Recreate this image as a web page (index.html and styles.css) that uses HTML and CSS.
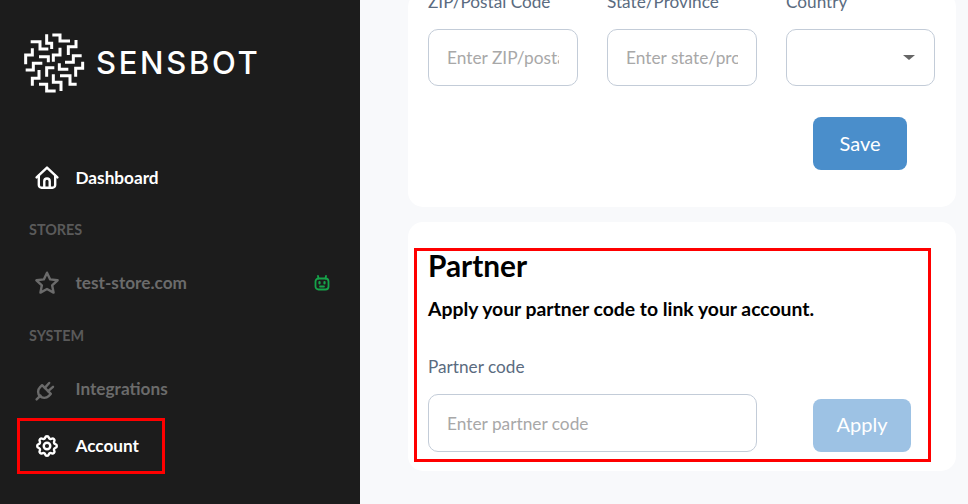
FILE: index.html
```html
<!DOCTYPE html>
<html lang="en">
<head>
    <meta charset="UTF-8">
    <meta name="viewport" content="width=device-width, initial-scale=1.0">
    <title>Sensbot - Account</title>
    <link rel="stylesheet" href="styles.css">
</head>
<body>
<div class="app">
    <aside class="sidebar">
        <div class="brand">
            <svg class="brand-mark" viewBox="0 0 240 225" fill="none" stroke="#fff" stroke-width="9">
                <path d="M112 30H135V48H165"/>
                <path d="M95 28V55H110V72"/>
                <path d="M47 50H75V72H100"/>
                <path d="M183 45V65H160V90"/>
                <path d="M135 68V90H115V110"/>
                <path d="M52 70V90H32V118"/>
                <path d="M72 95H100V112"/>
                <path d="M200 92H175V112H150"/>
                <path d="M82 115H55V135H32"/>
                <path d="M133 115V133H160"/>
                <path d="M118 128H95V155"/>
                <path d="M203 110V130H182V155"/>
                <path d="M72 135V160H52V182"/>
                <path d="M135 152H165V178H185"/>
                <path d="M115 148V172H138V198"/>
                <path d="M72 178H95V198H122"/>
            </svg>
            <span class="brand-name">SENSBOT</span>
        </div>
        <nav class="nav">
            <a class="nav-item active nav-first">
                <span class="nav-label">
                    <svg class="nav-icon" viewBox="1 1 22 22"><path d="M2.500 11.500 12 2.500l9.500 9"/><path d="M4.500 10v8.500a2.500 2.500 0 0 0 2.500 2.500h10a2.500 2.500 0 0 0 2.500-2.500V10"/><path d="M9.500 21v-6a2.500 2.500 0 0 1 5 0v6"/></svg>
                    Dashboard
                </span>
            </a>
            <div class="nav-heading">STORES</div>
            <a class="nav-item">
                <span class="nav-label">
                    <svg class="nav-icon" viewBox="1 1 22 22"><path d="M12 2.500l2.900 6.200 6.800.8-5 4.600 1.300 6.700-6-3.300-6 3.300 1.300-6.700-5-4.600 6.800-.8z"/></svg>
                    test-store.com
                </span>
                <svg class="bot-icon" viewBox="0 0 16 16"><path d="M4.500 3.500 4 1M11.500 3.500 12 1"/><rect x="1.500" y="3.500" width="13" height="11" rx="3"/><path class="bot-eyes" d="M5.500 7v1.500M10.500 7v1.500"/><path d="M6 11.500h4"/></svg>
            </a>
            <div class="nav-heading">SYSTEM</div>
            <a class="nav-item">
                <span class="nav-label">
                    <svg class="nav-icon" viewBox="1 1 22 22"><path d="M2.500 21.500l3.500-3.500"/><path d="M7.500 8.500l8 8-2 2a5 5 0 0 1-8-8z"/><path d="M10 11l4-4.500M13 14l4.500-4"/></svg>
                    Integrations
                </span>
            </a>
            <a class="nav-item active marked">
                <span class="nav-label">
                    <svg class="nav-icon" viewBox="1 1 22 22"><path d="M10.325 4.317c.426-1.756 2.924-1.756 3.350 0a1.724 1.724 0 0 0 2.573 1.066c1.543-.94 3.310.826 2.370 2.370a1.724 1.724 0 0 0 1.065 2.572c1.756.426 1.756 2.924 0 3.350a1.724 1.724 0 0 0-1.066 2.573c.94 1.543-.826 3.310-2.370 2.370a1.724 1.724 0 0 0-2.572 1.065c-.426 1.756-2.924 1.756-3.350 0a1.724 1.724 0 0 0-2.573-1.066c-1.543.94-3.310-.826-2.370-2.370a1.724 1.724 0 0 0-1.065-2.572c-1.756-.426-1.756-2.924 0-3.350a1.724 1.724 0 0 0 1.066-2.573c-.94-1.543.826-3.310 2.370-2.370c1 .608 2.296.07 2.572-1.065z"/><circle cx="12" cy="12" r="3"/></svg>
                    Account
                </span>
            </a>
        </nav>
    </aside>

    <main class="main">
        <section class="card address-card">
            <div class="field-grid">
                <div class="field">
                    <label>ZIP/Postal Code</label>
                    <input placeholder="Enter ZIP/postal code">
                </div>
                <div class="field">
                    <label>State/Province</label>
                    <input placeholder="Enter state/province">
                </div>
                <div class="field">
                    <label>Country</label>
                    <div class="select-wrap"><select></select></div>
                </div>
            </div>
            <div class="actions">
                <button class="btn">Save</button>
            </div>
        </section>

        <section class="card partner-card">
            <div class="partner-box">
                <h2>Partner</h2>
                <p class="partner-text">Apply your partner code to link your account.</p>
                <label>Partner code</label>
                <div class="partner-row">
                    <input placeholder="Enter partner code">
                    <button class="btn btn-disabled">Apply</button>
                </div>
            </div>
        </section>
    </main>
</div>
</body>
</html>
```

FILE: styles.css
```css
* {
    box-sizing: border-box;
}
body {
    margin: 0;
    font-family: Lato, 'Open Sans', sans-serif;
    background-color: #f8f9fb;
}
.app {
    display: flex;
    height: 100vh;
    overflow: hidden;
}

/* sidebar */
.sidebar {
    width: 360px;
    flex-shrink: 0;
    padding-top: 33px;
    background-color: #1c1c1c;
}
.brand {
    display: flex;
    align-items: center;
    height: 58px;
    padding-left: 15px;
}
.brand-mark {
    width: 80px;
    height: 75px;
    flex-shrink: 0;
}
.brand-name {
    margin-left: 1px;
    font-family: Inter, sans-serif;
    font-size: 31px;
    font-weight: 500;
    color: #fff;
    letter-spacing: 2.7px;
}
.nav {
    display: flex;
    flex-direction: column;
}
.nav-item {
    display: flex;
    align-items: center;
    justify-content: space-between;
    height: 40px;
    margin: 23px 30px 0 17px;
    padding-left: 19px;
    font-size: 17.2px;
    font-weight: 700;
    color: #6b6b6b;
}
.nav-first {
    margin-top: 67px;
    margin-bottom: -1px;
}
.nav-item.active {
    color: #fff;
}
.nav-item.marked {
    align-self: flex-start;
    width: 148px;
    height: 56px;
    margin-top: 9px;
    padding-left: 16px;
    border: 3px solid #f00;
}
.nav-label {
    display: flex;
    align-items: center;
    gap: 16.5px;
    padding-bottom: 2px;
}
.nav-icon {
    width: 24px;
    height: 24px;
    margin: 2px 0 0 -1px;
    fill: none;
    stroke: currentColor;
    stroke-width: 2.2;
    stroke-linecap: round;
    stroke-linejoin: round;
}
.bot-icon {
    width: 16px;
    height: 16px;
    fill: none;
    stroke: #16a34a;
    stroke-width: 1.8;
    stroke-linecap: round;
}
.bot-eyes {
    stroke-width: 2.2;
}
.nav-heading {
    height: 20px;
    margin: 23px 0 0 29px;
    font-size: 14.4px;
    font-weight: 700;
    line-height: 20px;
    color: #5a5a5a;
}

/* main */
.main {
    flex: 1;
    display: flex;
    flex-direction: column;
    justify-content: flex-end;
    gap: 15px;
    padding: 0 12px 33px 48px;
}
.card {
    flex-shrink: 0;
    background-color: #fff;
    border-radius: 15px;
}
.address-card {
    padding: 0 20px 37px;
}
.field-grid {
    display: grid;
    grid-template-columns: 150px 150px 149px;
    gap: 29px;
}
label {
    display: block;
    font-size: 17.2px;
    line-height: 20px;
    color: #5a6b80;
}
.field label {
    margin-bottom: 17px;
}
input,
select {
    display: block;
    width: 100%;
    height: 57px;
    padding: 0 18px;
    background-color: #fff;
    border: 1px solid #c3ccd8;
    border-radius: 10px;
    font-family: inherit;
    font-size: 17.3px;
    appearance: none;
}
input::placeholder {
    color: #a8a8a8;
}
.select-wrap {
    position: relative;
}
.select-wrap::after {
    content: "";
    position: absolute;
    top: 26px;
    right: 20px;
    border-top: 5px solid #666;
    border-left: 6px solid transparent;
    border-right: 6px solid transparent;
}
.actions {
    display: flex;
    justify-content: flex-end;
    margin-top: 31px;
    padding-right: 29px;
}
.btn {
    width: 94px;
    height: 53px;
    padding-bottom: 3px;
    background-color: #4a8ecb;
    border: none;
    border-radius: 8px;
    font-family: inherit;
    font-size: 20px;
    color: #fff;
}
.btn-disabled {
    width: 98px;
    padding-bottom: 5px;
    background-color: #9dc2e4;
}
.partner-card {
    padding: 26px 25px 9px 6px;
}
.partner-box {
    padding: 0 17px 7px 11px;
    border: 3px solid #f00;
}
h2 {
    margin: 0;
    font-size: 29.8px;
    font-weight: 700;
    line-height: 30px;
    color: #000;
}
.partner-text {
    margin: 16px 0 36px;
    font-size: 19.35px;
    font-weight: 700;
    line-height: 24px;
    color: #000;
}
.partner-row {
    display: flex;
    align-items: flex-end;
    justify-content: space-between;
    margin-top: 17px;
}
.partner-row input {
    width: 329px;
    height: 58px;
}
```
